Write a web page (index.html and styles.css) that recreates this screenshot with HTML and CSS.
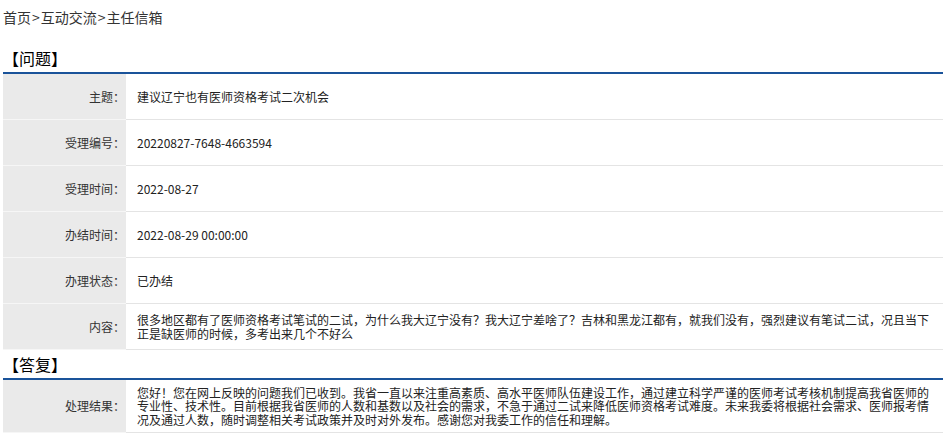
FILE: index.html
```html
<!DOCTYPE html>
<html lang="zh-CN">
<head>
<meta charset="utf-8">
<title>主任信箱</title>
<link rel="stylesheet" href="styles.css">
</head>
<body>
<div class="page">
  <div class="crumb">首页<span class="gt">&gt;</span>互动交流<span class="gt">&gt;</span>主任信箱</div>

  <div class="sec-title">【问题】</div>
  <div class="rows">
    <div class="row"><div class="label">主题：</div><div class="value">建议辽宁也有医师资格考试二次机会</div></div>
    <div class="row"><div class="label">受理编号：</div><div class="value">20220827-7648-4663594</div></div>
    <div class="row"><div class="label">受理时间：</div><div class="value">2022-08-27</div></div>
    <div class="row"><div class="label">办结时间：</div><div class="value">2022-08-29 00:00:00</div></div>
    <div class="row"><div class="label">办理状态：</div><div class="value">已办结</div></div>
    <div class="row"><div class="label">内容：</div><div class="value">很多地区都有了医师资格考试笔试的二试，为什么我大辽宁没有？我大辽宁差啥了？吉林和黑龙江都有，就我们没有，强烈建议有笔试二试，况且当下正是缺医师的时候，多考出来几个不好么</div></div>
  </div>

  <div class="sec-title">【答复】</div>
  <div class="rows">
    <div class="row"><div class="label">处理结果：</div><div class="value">您好！您在网上反映的问题我们已收到。我省一直以来注重高素质、高水平医师队伍建设工作，通过建立科学严谨的医师考试考核机制提高我省医师的专业性、技术性。目前根据我省医师的人数和基数以及社会的需求，不急于通过二试来降低医师资格考试难度。未来我委将根据社会需求、医师报考情况及通过人数，随时调整相关考试政策并及时对外发布。感谢您对我委工作的信任和理解。</div></div>
  </div>
</div>
</body>
</html>
```

FILE: styles.css
```css
html, body {
  margin: 0;
  padding: 0;
  background: #fff;
}

body {
  font-family: "Microsoft YaHei", "Noto Sans CJK SC", "Noto Sans", sans-serif;
  color: #333;
}

.page {
  width: 940px;
  margin-left: 3px;
}

.crumb {
  padding-top: 7px;
  font-size: 14px;
  line-height: 20px;
  height: 20px;
  color: #333;
  margin-bottom: 17px;
}

.crumb .gt {
  padding: 0 1px;
}

.sec-title {
  font-size: 16px;
  line-height: 20px;
  padding: 4px 0;
  color: #000;
  border-bottom: 2px solid #1a539a;
}

.rows {
  display: flex;
  flex-direction: column;
}

.row {
  display: flex;
  min-height: 46px;
  font-size: 12px;
  line-height: 13.4px;
}

.label {
  width: 122px;
  flex: none;
  background: #eaeaea;
  display: flex;
  align-items: center;
  justify-content: flex-end;
  padding-right: 1px;
  border-bottom: 1px solid #f6f6f6;
}

.value {
  flex: 1;
  display: flex;
  align-items: center;
  padding: 6px 12px 6px 11px;
  border-bottom: 1px solid #e4e4e4;
  color: #222;
}
```
